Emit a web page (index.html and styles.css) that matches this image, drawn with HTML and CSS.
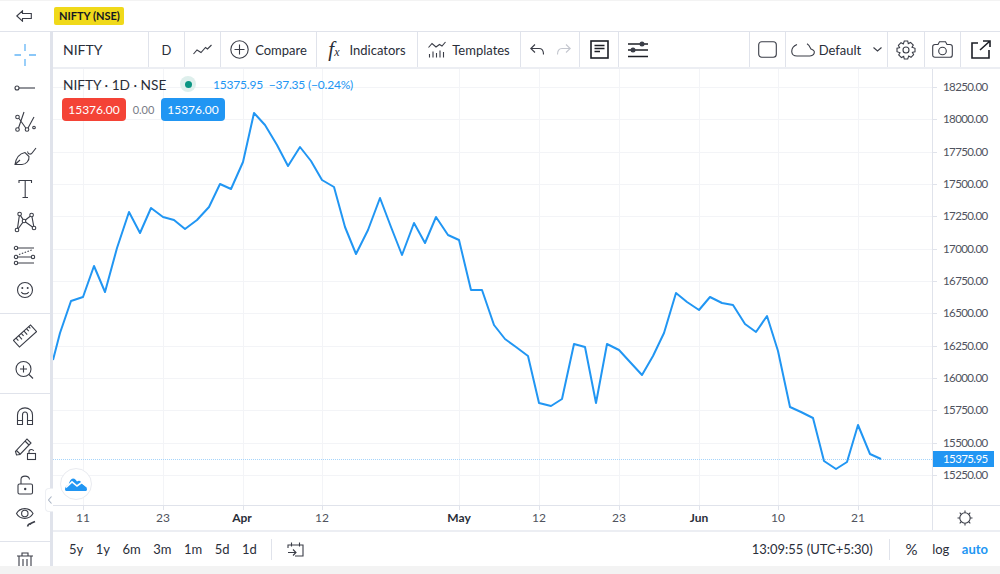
FILE: index.html
```html
<!DOCTYPE html>
<html lang="en">
<head>
  <meta charset="UTF-8" />
  <title>NIFTY Chart</title>
  <link rel="stylesheet" href="styles.css">
</head>
<body>
  <div class="topbar">
    <span class="back">
      <svg width="16" height="12" viewBox="0 0 16 12"><path d="M.8 6L6.500 .8V3.500H15.300V8.500H6.500V11.200Z"/></svg>
    </span>
    <span class="badge">NIFTY (NSE)</span>
  </div>

  <div class="main">
    <div class="side">
      <div class="side-group first">
        <span class="tool"><svg class="blue" viewBox="0 0 24 24"><path d="M1.500 12H8M16 12H23M12 1V8M12 16V23"/></svg></span>
        <span class="tool"><svg viewBox="0 0 24 24"><circle cx="4" cy="12" r="2"/><path d="M6 12H22"/></svg></span>
        <span class="tool"><svg viewBox="0 0 24 24"><circle cx="4.500" cy="7" r="1.800"/><circle cx="4.500" cy="19.500" r="1.800"/><circle cx="14" cy="19.500" r="1.800"/><circle cx="21" cy="17.500" r="1.300"/><path d="M6 8.500L12.800 18M5.500 18L11 2M15 18L21 7"/></svg></span>
        <span class="tool"><svg viewBox="0 0 24 24"><path d="M2 20.500C3 14 7 9.500 12 8.500L16 12.500C16.500 16.500 13 20.500 9 20.500ZM2 20.500L7 16M14.500 7.500C15 10.500 18 11 19.500 8.500L23 4"/></svg></span>
        <span class="tool"><svg viewBox="0 0 24 24"><path d="M6 6V3.500H18.500V6M12.200 3.500V20.500M9.500 20.500H15"/></svg></span>
        <span class="tool"><svg viewBox="0 0 24 24"><circle cx="6.600" cy="3" r="1.800"/><circle cx="18.600" cy="4" r="1.800"/><circle cx="4" cy="19" r="1.800"/><circle cx="21" cy="17" r="1.800"/><circle cx="11" cy="10" r="1.800"/><path d="M4.500 17.300L6.300 4.800M7.500 4.600L10 8.400M12.400 9L17.200 5.200M19 5.800L20.700 15.200M5.200 17.700L9.800 11.400M12.500 11L19.500 16"/></svg></span>
        <span class="tool"><svg viewBox="0 0 24 24"><circle cx="3" cy="4" r="1.700"/><circle cx="3" cy="13" r="1.700"/><circle cx="20" cy="13" r="1.700"/><circle cx="3" cy="19" r="1.700"/><path d="M4.700 4H21M4.700 13H18.300M4.700 19H21"/><path class="dots" d="M6 10.500L20 5.500"/></svg></span>
        <span class="tool"><svg viewBox="0 0 24 24"><circle cx="12" cy="12" r="7.500"/><circle class="solid" cx="9.300" cy="10" r="1"/><circle class="solid" cx="14.700" cy="10" r="1"/><path d="M8.300 14C9.500 16.500 14.500 16.500 15.700 14"/></svg></span>
      </div>
      <div class="side-group second">
        <span class="tool"><svg viewBox="0 0 24 24"><g transform="rotate(-42 12 12)"><rect x="0.500" y="7.500" width="23" height="9"/><path d="M4 7.500V11M7.500 7.500V12.500M11 7.500V11M14.500 7.500V12.500M18 7.500V11M21 7.500V10"/></g></svg></span>
        <span class="tool"><svg viewBox="0 0 24 24"><circle cx="10.500" cy="11" r="7.500"/><path d="M10.500 7.500V14.500M7 11H14M16 16.500L20 20.500"/></svg></span>
      </div>
      <div class="side-group second">
        <span class="tool"><svg viewBox="0 0 24 24"><path d="M4.500 20.500V11C4.500 1.500 19.500 1.500 19.500 11V20.500H14.500V11C14.500 7 9.500 7 9.500 11V20.500ZM4.500 16.500H9.500M14.500 16.500H19.500"/></svg></span>
        <span class="tool"><svg viewBox="0 0 24 24"><g transform="translate(0 -4)"><path d="M2.500 17.500L3.500 21L7 20.500L18 9L14 5ZM12 7L16 11M3.500 16.500L7 20"/></g><path d="M16 15.500V13.500C16 11 20.500 11 20.500 13"/><rect x="14.500" y="15.500" width="8" height="6"/></svg></span>
        <span class="tool"><svg viewBox="0 0 24 24"><path d="M8 12V7.500C8 3 16 3 16.500 7.500"/><rect x="5" y="12" width="14.500" height="10" rx="1.500"/><circle class="solid" cx="12.200" cy="17" r="1.200"/></svg></span>
        <span class="tool eye"><svg viewBox="0 0 24 24"><path d="M3.500 9.500C7 3 16.500 3 20 9.500C16.500 16 7 16 3.500 9.500Z"/><circle cx="11.800" cy="9.500" r="3.200"/><path class="thick" d="M14.500 22.500C15.500 19.500 17 19.500 18 20.500M17.500 19.500L22 17.500"/></svg></span>
      </div>
      <div class="side-group last">
        <span class="tool"><svg viewBox="0 0 24 24"><path d="M4 6H20M9 6V3H15V6M6 6V22H18V6M10 9V19M14 9V19"/></svg></span>
      </div>
      <span class="collapse">
        <svg width="4" height="8" viewBox="0 0 4 8"><path d="M3.500 .5L.5 4L3.500 7.500"/></svg>
      </span>
    </div>

    <div class="work">
      <div class="toolbar">
        <div class="cell symbol">NIFTY</div>
        <div class="cell w36">D</div>
        <div class="cell w36">
          <svg width="19" height="12" viewBox="0 0 19 12"><path d="M.5 10L4 6L8 8.500L12.500 3.500L14.500 5L18.500 1"/></svg>
        </div>
        <div class="cell compare">
          <svg width="19" height="19" viewBox="0 0 19 19"><circle cx="9.500" cy="9.500" r="8.700"/><path d="M9.500 4.500V14.500M4.500 9.500H14.500"/></svg>
          Compare
        </div>
        <div class="cell indicators">
          <span class="fx">f<small>x</small></span>
          Indicators
        </div>
        <div class="cell templates">
          <svg width="18" height="17" viewBox="0 0 18 17"><path d="M.5 6.500L4 2.500L8 6L11.500 3.500L14 5L17.500 1"/><path d="M1.500 13V16.500M5 10.500V16.500M8.500 12V16.500M12 9.500V16.500M15.500 11V16.500"/></svg>
          Templates
        </div>
        <div class="cell history">
          <svg width="14" height="11" viewBox="0 0 14 11"><path d="M5 .5L.8 4.500L5 8.500M.8 4.500H9C12 4.500 13.500 7 13.500 10.500"/></svg>
          <svg class="off" width="14" height="11" viewBox="0 0 14 11"><path d="M9 .5L13.200 4.500L9 8.500M13.200 4.500H5C2 4.500 .5 7 .5 10.500"/></svg>
        </div>
        <div class="cell note">
          <svg width="19" height="19" viewBox="0 0 19 19"><rect class="bold" x="1" y="1" width="17" height="17"/><path class="bold" d="M4.500 5.500H14.500M4.500 8.500H14.500M4.500 11.500H10"/></svg>
        </div>
        <div class="cell sliders">
          <svg width="20" height="17" viewBox="0 0 20 17"><path d="M0 3H20M0 9H20M0 15.500H20"/><circle class="solid" cx="14" cy="3" r="2.500"/><circle class="solid" cx="5" cy="9" r="2.500"/></svg>
        </div>
        <div class="cell w36">
          <svg width="19" height="17" viewBox="0 0 19 17"><rect x=".7" y=".7" width="17.600" height="15.600" rx="3"/></svg>
        </div>
        <div class="cell layout">
          <svg width="24" height="14" viewBox="0 0 24 14"><path d="M6 1.500C2.500 3 .5 6 .8 9C1 11.500 3 13 6 13H19C22 13 23.500 11 23.300 8.500C23 7 21 6.500 20 6C19 4 18 1.800 16 .8"/></svg>
          Default
          <svg class="chev" width="9" height="5" viewBox="0 0 9 5"><path d="M.5 .5L4.500 4L8.500 .5"/></svg>
        </div>
        <div class="cell w37">
          <svg width="20" height="20" viewBox="0 0 20 20"><path d="M8.300 1H11.700L12.300 3.600L14.600 2.400L17.300 5L16 7.300L19 8.300V11.700L16.400 12.300L17.600 14.600L15 17.300L12.700 16L11.700 19H8.300L7.700 16.400L5.400 17.600L2.700 15L4 12.700L1 11.700V8.300L3.600 7.700L2.400 5.400L5 2.700L7.300 4Z"/><circle cx="10" cy="10" r="3"/></svg>
        </div>
        <div class="cell w36">
          <svg width="21" height="17" viewBox="0 0 21 17"><path d="M3 3.500H6L7.500 .8H13.500L15 3.500H18C19.500 3.500 20.300 4.300 20.300 5.800V14C20.300 15.500 19.500 16.300 18 16.300H3C1.500 16.300 .7 15.500 .7 14V5.800C.7 4.300 1.500 3.500 3 3.500Z"/><circle cx="10.500" cy="10" r="3.800"/></svg>
        </div>
        <div class="cell export">
          <svg width="20" height="19" viewBox="0 0 20 19"><path class="bold" d="M7 3H1V18H18V10M9 10L19 1M12 1H19V7"/></svg>
        </div>
      </div>

      <div class="chart-row">
        <div class="pane">
          <svg class="plot" width="879" height="436" viewBox="53 69 879 436">
            <path class="grid" d="M83.500 69V505M163.500 69V505M243.500 69V505M322.500 69V505M459.500 69V505M539.500 69V505M619.500 69V505M699.500 69V505M778.500 69V505M858.500 69V505"/>
            <path class="grid" d="M53 87.500H932M53 119.500H932M53 152.500H932M53 184.500H932M53 216.500H932M53 249.500H932M53 281.500H932M53 313.500H932M53 346.500H932M53 378.500H932M53 410.500H932M53 443.500H932M53 475.500H932"/>
            <line class="last-line" x1="53" y1="459.500" x2="932" y2="459.500"/>
            <polyline class="series" points="53,360 60,333 71,301 83,297 94,266 105,292 117,248 129,212 140,233 151,208 163,217 174,220 185,229 197,220 209,207 220,184 231,189 243,162 254,113 265,125 277,145 288,166 300,147 311,161 322,180 334,187 345,227 356,254 368,230 380,198 391,227 402,255 414,223 425,243 436,217 448,235 459,240 471,290 482,290 494,325 505,339 516,347 528,356 539,403 551,406 562,399 574,344 585,347 596,403 607,344 619,350 630,362 642,375 653,356 664,333 676,293 687,302 699,310 710,297 722,303 733,305 745,324 756,332 767,316 778,351 790,407 801,412 813,418 824,461 836,469 847,462 858,425 870,454 881,459"/>
          </svg>

          <div class="legend">
            <div class="legend-line">
              <span class="legend-title">NIFTY · 1D · NSE</span>
              <span class="status"><i></i></span>
              <span class="legend-values">15375.95 &nbsp;−37.35 (−0.24%)</span>
            </div>
            <div class="legend-line trade">
              <span class="trade-btn sell">15376.00</span>
              <span class="spread">0.00</span>
              <span class="trade-btn buy">15376.00</span>
            </div>
          </div>

          <span class="logo">
            <svg width="22" height="13" viewBox="0 0 22 13">
              <path class="cloud" d="M0 11.500C0 9 1.500 7.500 3.500 7C4.500 3 6 .5 8 .5C10 .5 11 2 12 3.500C13.500 2.500 15 2.500 16 4C17 5 17.500 6 18 6.500C20 7 22 9 22 11.500C22 12.500 21 13 20 13H2C1 13 0 12.500 0 11.500Z"/>
              <path class="wave" d="M1 9.500L7 3.800L12 8L16.700 4.500L21.500 8.500"/>
            </svg>
          </span>
        </div>
        <div class="price-axis">
          <span class="tick">18250.00</span>
          <span class="tick">18000.00</span>
          <span class="tick">17750.00</span>
          <span class="tick">17500.00</span>
          <span class="tick">17250.00</span>
          <span class="tick">17000.00</span>
          <span class="tick">16750.00</span>
          <span class="tick">16500.00</span>
          <span class="tick">16250.00</span>
          <span class="tick">16000.00</span>
          <span class="tick">15750.00</span>
          <span class="tick">15500.00</span>
          <span class="tick">15250.00</span>
          <span class="last-tag">15375.95</span>
        </div>
      </div>

      <div class="time-row">
        <svg class="time-axis" width="879" height="24" viewBox="53 506 879 24">
          <path class="tick-mark" d="M83.500 506V510M163.500 506V510M243.500 506V510M322.500 506V510M459.500 506V510M539.500 506V510M619.500 506V510M699.500 506V510M778.500 506V510M858.500 506V510"/>
          <text x="83" y="522">11</text>
          <text x="163" y="522">23</text>
          <text class="month" x="242" y="522">Apr</text>
          <text x="322" y="522">12</text>
          <text class="month" x="459" y="522">May</text>
          <text x="539" y="522">12</text>
          <text x="619" y="522">23</text>
          <text class="month" x="699" y="522">Jun</text>
          <text x="778" y="522">10</text>
          <text x="858" y="522">21</text>
        </svg>
        <div class="time-corner">
          <svg width="16" height="16" viewBox="0 0 16 16"><circle cx="8" cy="8" r="5.200"/><path d="M8 .5V2.800M8 13.200V15.500M.5 8H2.800M13.200 8H15.500M2.700 2.700L4.300 4.300M11.700 11.700L13.300 13.300M2.700 13.300L4.300 11.700M11.700 4.300L13.300 2.700"/></svg>
        </div>
      </div>

      <div class="bottombar">
        <span>5y</span>
        <span>1y</span>
        <span>6m</span>
        <span>3m</span>
        <span>1m</span>
        <span>5d</span>
        <span>1d</span>
        <i class="sep"></i>
        <svg class="calendar" width="17" height="15" viewBox="0 0 17 15"><path d="M1 6V3H16V14H8M4.500 .5V4.500M12.500 .5V4.500M1 10.500H9M6 7.500L9 10.500L6 13.500"/></svg>
        <span class="clock">13:09:55 (UTC+5:30)</span>
        <i class="sep"></i>
        <span class="pct">%</span>
        <span>log</span>
        <span class="auto">auto</span>
      </div>
    </div>
  </div>
</body>
</html>
```

FILE: styles.css
```css
* {
  box-sizing: border-box;
}

html, body {
  margin: 0;
  height: 574px;
  overflow: hidden;
}

body {
  background: #f3f3f3;
  font-family: 'Lato', 'Open Sans', sans-serif;
  font-size: 13px;
  color: #2a2e39;
}

svg {
  display: block;
  fill: none;
  stroke: #3a3d47;
  stroke-width: 1.1;
}

svg .solid {
  fill: #3a3d47;
  stroke: none;
}

.topbar {
  height: 32px;
  background: white;
  border-top: 1px solid #f3f3f3;
  border-bottom: 1px solid #e0e3eb;
  display: flex;
  align-items: center;
  padding-left: 16px;
  gap: 22px;
}

.badge {
  background: #f0d91a;
  border-radius: 2px;
  padding: 0 5px;
  height: 18px;
  line-height: 18px;
  width: 70px;
  white-space: nowrap;
  font-size: 11px;
  font-weight: 700;
  color: #131722;
  margin-top: -1px;
}

.main {
  display: flex;
  height: 534px;
  overflow: hidden;
}

/* left drawing tools */
.side {
  width: 53px;
  flex: none;
  position: relative;
  background: white;
  border-right: 3px solid #e0e3eb;
}

.side-group {
  border-bottom: 1px solid #e0e3eb;
  padding: 5px 0 6px;
}

.side-group.first {
  padding-top: 6px;
  height: 282px;
}

.side-group.first .tool {
  height: 33.6px;
}

.side-group.last {
  border-bottom: none;
  padding-top: 3px;
}

.tool {
  height: 34px;
  display: flex;
  align-items: center;
  justify-content: center;
}

.tool svg {
  width: 24px;
  height: 24px;
}

.tool .blue {
  stroke: #64b5f6;
  stroke-width: 1.3;
}

.tool .dots {
  stroke-dasharray: 1.5 1.5;
}

.tool .thick {
  stroke-width: 1.6;
}

.eye svg {
  margin-top: -5px;
}

.collapse {
  position: absolute;
  right: -3px;
  top: 456px;
  width: 8px;
  height: 24px;
  background: white;
  border: 1px solid #eef0f4;
  border-right: none;
  border-radius: 4px 0 0 4px;
  display: flex;
  align-items: center;
  justify-content: center;
}

.collapse svg {
  stroke: #a9b4c4;
}

.work {
  flex: 1;
  min-width: 0;
  background: white;
}

/* top toolbar */
.toolbar {
  display: flex;
  height: 37px;
  border-bottom: 2px solid #eceef3;
}

.cell {
  display: flex;
  align-items: center;
  justify-content: center;
  gap: 6px;
  border-right: 1px solid #e0e3eb;
  white-space: nowrap;
  font-size: 13px;
}

.symbol {
  width: 96px;
  justify-content: flex-start;
  padding-left: 10px;
  font-size: 14px;
}

.w36 {
  width: 36px;
}

.w37 {
  width: 37px;
}

.compare {
  width: 96px;
}

.indicators {
  width: 101px;
  gap: 10px;
}

.templates {
  width: 103px;
}

.history {
  width: 59px;
  gap: 13px;
}

.history .off {
  stroke: #c4c7cf;
}

.note {
  width: 39px;
}

.sliders {
  flex: 1;
  justify-content: flex-start;
  padding-left: 9px;
}

.layout {
  width: 102px;
  gap: 4px;
}

.chev {
  margin-left: 8px;
}

.export {
  width: 39px;
  border-right: none;
}

svg .bold,
.sliders svg {
  stroke-width: 1.6;
  stroke: #1c1f26;
}

.fx {
  font-family: 'Liberation Serif', serif;
  font-style: italic;
  font-size: 21px;
  line-height: 1;
}

.fx small {
  font-size: 12px;
}

/* chart */
.chart-row {
  display: flex;
  height: 436px;
}

.pane {
  flex: 1;
  position: relative;
  min-width: 0;
}

.plot {
  position: absolute;
  left: 0;
  top: 0;
}

.grid {
  stroke: #f3f4f7;
  stroke-width: 1;
}

.series {
  stroke: #2196f3;
  stroke-width: 2;
  stroke-linejoin: round;
}

.last-line {
  stroke: #a5d4fb;
  stroke-width: 1;
  stroke-dasharray: 1 1;
}

.legend {
  position: absolute;
  left: 10px;
  top: 6px;
}

.legend-line {
  display: flex;
  align-items: center;
  height: 18px;
}

.legend-title {
  font-size: 13.7px;
  width: 103px;
  white-space: nowrap;
}

.status {
  width: 16px;
  height: 16px;
  margin-left: 14px;
  border-radius: 50%;
  background: #deefec;
  display: flex;
  align-items: center;
  justify-content: center;
}

.status i {
  width: 7px;
  height: 7px;
  border-radius: 50%;
  background: #0a9582;
}

.legend-values {
  margin-left: 17px;
  font-size: 12px;
  letter-spacing: -.2px;
  color: #2196f3;
  white-space: nowrap;
}

.trade {
  height: 23px;
  margin-top: 5px;
  margin-left: -1px;
}

.trade-btn {
  width: 64px;
  height: 23px;
  line-height: 23px;
  text-align: center;
  border-radius: 4px;
  color: white;
  font-size: 12px;
}

.sell {
  background: #f44336;
}

.buy {
  background: #2196f3;
}

.spread {
  width: 35px;
  text-align: center;
  font-size: 11px;
  color: #787b86;
}

.logo {
  position: absolute;
  left: 7px;
  top: 399px;
  width: 32px;
  height: 32px;
  border-radius: 50%;
  background: white;
  border: 1px solid #e9ebf0;
  display: flex;
  align-items: center;
  justify-content: center;
}

.logo .cloud {
  fill: #2196f3;
  stroke: none;
}

.logo .wave {
  stroke: white;
  stroke-width: 1.6;
}

.price-axis {
  width: 68px;
  flex: none;
  position: relative;
  border-left: 1px solid #e0e3eb;
  padding-top: 2px;
  display: flex;
  flex-direction: column;
}

.tick {
  height: 32.33px;
  line-height: 32.33px;
  padding-left: 10px;
  font-size: 11.5px;
  letter-spacing: -.6px;
  color: #50535e;
  position: relative;
}

.tick::before {
  content: "";
  position: absolute;
  left: 0;
  top: 16px;
  width: 4px;
  height: 1px;
  background: #e0e3eb;
}

.last-tag {
  position: absolute;
  left: 0;
  top: 382px;
  width: 61px;
  height: 16px;
  line-height: 16px;
  padding-left: 10px;
  background: #2196f3;
  color: white;
  font-size: 11.5px;
  letter-spacing: -.6px;
}

/* time axis */
.time-row {
  display: flex;
  height: 27px;
  border-top: 1px solid #e0e3eb;
  border-bottom: 2px solid #eceef3;
}

.tick-mark {
  stroke: #e0e3eb;
  stroke-width: 1;
}

.time-axis text {
  fill: #50535e;
  stroke: none;
  font-size: 12px;
  text-anchor: middle;
}

.time-axis .month {
  font-weight: 700;
  fill: #2a2e39;
}

.time-corner {
  flex: 1;
  border-left: 1px solid #e0e3eb;
  padding-right: 4px;
  display: flex;
  align-items: center;
  justify-content: center;
}

/* range buttons */
.bottombar {
  height: 34px;
  display: flex;
  align-items: center;
  gap: 12.5px;
  padding-left: 16px;
  font-size: 13px;
}

.sep {
  width: 1px;
  height: 21px;
  background: #e0e3eb;
  margin-left: 2px;
}

.calendar {
  margin-left: 2px;
}

.clock {
  margin-left: auto;
  margin-right: 2px;
}

.pct {
  font-size: 15px;
  margin-left: 3px;
  margin-right: 2px;
}

.auto {
  color: #2196f3;
  font-weight: 700;
  margin-right: 12px;
}
```
